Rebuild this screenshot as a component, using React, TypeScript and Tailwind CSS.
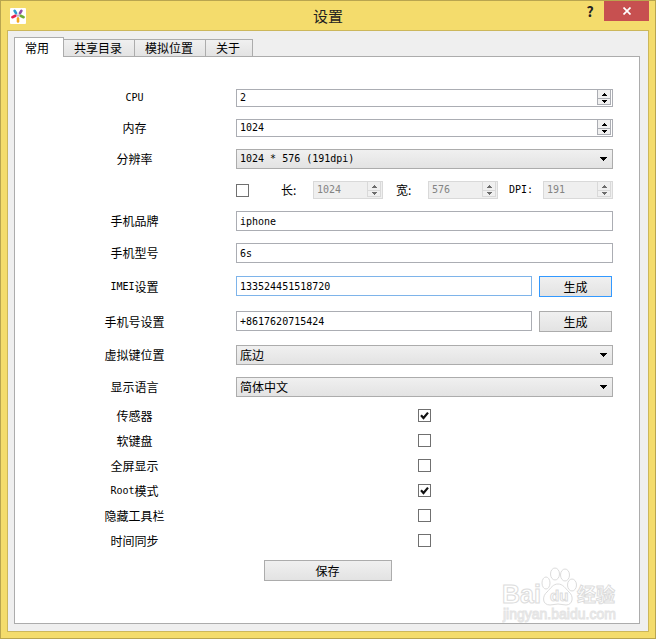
import { useState, type ReactNode } from "react";

const latin = "font-['DejaVu_Sans_Mono','Noto_Sans_CJK_SC',monospace] text-[10px]";
const face = "bg-linear-to-b from-[#f0f0f0] to-[#e3e3e3]";

const tabs = ["常用", "共享目录", "模拟位置", "关于"];

const toggles = [
    { id: "sensor", label: "传感器", on: true },
    { id: "keyboard", label: "软键盘", on: false },
    { id: "fullscreen", label: "全屏显示", on: false },
    { id: "root", prefix: "Root", label: "模式", on: true },
    { id: "toolbar", label: "隐藏工具栏", on: false },
    { id: "time", label: "时间同步", on: false },
];

interface RowProps {
    id: string;
    prefix?: string;
    label?: string;
    className?: string;
    children: ReactNode;
}

function Row({ id, prefix, label, className = "", children }: RowProps) {
    return (
        <div className={`flex items-center gap-[9px] ${className}`}>
            <label htmlFor={id} className="flex w-[185px] shrink-0 items-center justify-center leading-4">
                {prefix && <span className={latin}>{prefix}</span>}
                {label}
            </label>
            <div className="min-w-0 flex-1">{children}</div>
        </div>
    );
}

function Arrow({ up = false }: { up?: boolean }) {
    return (
        <svg width="5" height="3" viewBox="0 0 5 3" fill="currentColor" shapeRendering="crispEdges">
            {up ? <path d="M2 0h1v1h1v1h1v1H0V2h1V1h1z" /> : <path d="M0 0h5v1H4v1H3v1H2V2H1V1H0z" />}
        </svg>
    );
}

function SpinBox({ id, value, disabled = false }: { id: string; value: number; disabled?: boolean }) {
    const [current, setCurrent] = useState(value);
    const line = disabled ? "border-[#d9d9d9]" : "border-[#abadb3]";
    const box = disabled ? "w-[70px] bg-[#efefef] text-[#838383]" : "w-full bg-white";
    const step = `flex w-[14px] items-center justify-center border border-t-0 bg-[#f0f0f0] ${line}`;

    return (
        <div className={`flex h-[18px] border pr-px ${line} ${box}`}>
            <input
                id={id}
                type="number"
                value={current}
                disabled={disabled}
                onChange={(e) => setCurrent(Number(e.target.value))}
                className={`min-w-0 flex-1 bg-transparent pl-[3px] outline-none [appearance:textfield] [&::-webkit-inner-spin-button]:appearance-none ${latin}`}
            />
            <div className={`flex flex-col ${disabled ? "text-[#6d6d6d]" : "text-black"}`}>
                <button type="button" aria-label="增加" disabled={disabled} onClick={() => setCurrent(current + 1)} className={`h-[9px] pt-px ${step}`}>
                    <Arrow up />
                </button>
                <button type="button" aria-label="减少" disabled={disabled} onClick={() => setCurrent(current - 1)} className={`h-[6px] ${step}`}>
                    <Arrow />
                </button>
            </div>
        </div>
    );
}

function TextBox({ id, value, focused = false }: { id: string; value: string; focused?: boolean }) {
    return (
        <input
            id={id}
            type="text"
            defaultValue={value}
            className={`block h-5 w-full min-w-0 border bg-white px-[3px] outline-none ${latin} ${focused ? "border-[#7eb4ea]" : "border-[#abadb3]"}`}
        />
    );
}

function Dropdown({ id, options, mono = false }: { id: string; options: string[]; mono?: boolean }) {
    return (
        <div className="relative">
            <select id={id} className={`block h-5 w-full appearance-none border border-[#acacac] px-[3px] outline-none ${face} ${mono ? latin : "leading-4"}`}>
                {options.map((option) => (
                    <option key={option}>{option}</option>
                ))}
            </select>
            <svg className="pointer-events-none absolute top-2 right-[6px]" width="7" height="4" viewBox="0 0 7 4" shapeRendering="crispEdges">
                <path d="M0 0h7v1H6v1H5v1H4v1H3V3H2V2H1V1H0z" />
            </svg>
        </div>
    );
}

function CheckBox({ id, checked = false, name }: { id: string; checked?: boolean; name?: string }) {
    return (
        <span className="relative block size-[13px]">
            <input id={id} type="checkbox" aria-label={name} defaultChecked={checked} className="peer block size-[13px] appearance-none border border-[#707070] bg-white" />
            <svg className="pointer-events-none absolute inset-0 hidden peer-checked:block" width="13" height="13" viewBox="0 0 13 13">
                <path d="M3 6.3L5.5 9 10 3.6" fill="none" stroke="#111" strokeWidth="2.2" />
            </svg>
        </span>
    );
}

function PushButton({ children, className }: { children: ReactNode; className: string }) {
    return (
        <button type="button" className={`h-[21px] shrink-0 border leading-4 ${face} ${className}`}>
            {children}
        </button>
    );
}

function AppIcon() {
    return (
        <svg width="16" height="16" viewBox="0 0 16 16" strokeWidth="2.6" strokeLinecap="round">
            <rect width="16" height="16" rx="1" fill="#fff" />
            <path d="M7.800 7.800L6 5M8.200 7.800L10 5M8 8v2" stroke="#b9a3cf" strokeWidth="1" />
            <path d="M4.600 2.800l1.500 2.400" stroke="#2e9bd0" />
            <path d="M11.400 2.800L9.900 5.200" stroke="#9150a8" />
            <path d="M2.400 9.200l3-1.400" stroke="#e5214f" />
            <path d="M13.600 9.200l-3-1.400" stroke="#6fae35" />
            <path d="M8 10.500v3" stroke="#f5a51d" />
        </svg>
    );
}

function Watermark() {
    return (
        <svg
            className="pointer-events-none absolute right-[17px] bottom-0"
            width="120"
            height="58"
            viewBox="0 0 120 58"
            fill="#fff"
            stroke="#dcdcdc"
            fontFamily="'Liberation Sans','Noto Sans CJK SC',sans-serif"
            fontWeight="bold"
            aria-hidden="true"
        >
            <text x="0" y="38" fontSize="25">Bai</text>
            <path d="M56 19c5 0 7 4 11 8 5 4 4 13-3 13-3 0-5-1-8-1s-5 1-8 1c-8 0-8-9-3-13 4-4 6-8 11-8z" />
            <ellipse cx="44" cy="18" rx="4" ry="6" />
            <ellipse cx="53" cy="9" rx="4.500" ry="6" />
            <ellipse cx="63" cy="10" rx="4.500" ry="6" />
            <ellipse cx="70" cy="20" rx="4.500" ry="6" />
            <text x="48" y="36" fontSize="15">du</text>
            <text x="75" y="37" fontSize="19" fontFamily="'Noto Sans CJK SC',sans-serif">经验</text>
            <text x="1" y="54" fontSize="14" fontWeight="normal" stroke="#e4e4e4">jingyan.baidu.com</text>
        </svg>
    );
}

export default function App() {
    const [active, setActive] = useState(0);

    return (
        <div className="flex min-h-screen flex-col border border-[#b9a54f] bg-[#f4dc6c] px-[6px] pb-[6px] font-['Noto_Sans_CJK_SC',sans-serif] text-xs text-black">
            <header className="relative flex h-[29px] shrink-0 items-center justify-between pl-[3px]">
                <AppIcon />
                <h1 className="absolute inset-x-0 text-center text-[15px] leading-5 text-[#222]">设置</h1>
                <div className="relative flex self-start">
                    <button type="button" aria-label="帮助" className="h-5 w-7 text-sm font-bold text-[#222]">
                        ?
                    </button>
                    <button type="button" aria-label="关闭" className="flex h-5 w-[45px] items-center justify-center bg-[#c75050]">
                        <svg width="8" height="8" viewBox="0 0 8 8" stroke="#fff" strokeWidth="1.7">
                            <path d="M.5.5l7 7M7.500.5l-7 7" />
                        </svg>
                    </button>
                </div>
            </header>

            <main className="flex flex-1 flex-col border border-[#ccb75b] bg-[#efefef] pt-[6px] pr-2 pb-[7px] pl-[6px]">
                <div role="tablist" className="relative z-10 -mb-px flex items-end">
                    {tabs.map((tab, i) => (
                        <button
                            key={tab}
                            type="button"
                            role="tab"
                            aria-selected={active === i}
                            onClick={() => setActive(i)}
                            className={`-mr-px border border-[#acacac] leading-4 ${active === i ? "h-5 border-b-0 bg-white pr-[14px] pl-[10px]" : `h-[18px] pr-3 pl-[10px] ${face}`}`}
                        >
                            {tab}
                        </button>
                    ))}
                </div>

                <section className="relative flex-1 border border-[#acacac] bg-white pt-8 pr-[26px] pl-[27px]">
                    <form className="flex flex-col">
                        <div className="flex flex-col gap-3">
                            <Row id="cpu" prefix="CPU" className="h-[18px]">
                                <SpinBox id="cpu" value={2} />
                            </Row>
                            <Row id="memory" label="内存" className="h-[18px]">
                                <SpinBox id="memory" value={1024} />
                            </Row>
                            <Row id="resolution" label="分辨率" className="h-5">
                                <Dropdown id="resolution" options={["1024 * 576 (191dpi)"]} mono />
                            </Row>
                            <div className="flex h-[18px] items-center justify-between pl-[194px]">
                                <CheckBox id="custom" name="自定义分辨率" />
                                <div className="flex items-center gap-[11px]">
                                    <div className="flex items-center">
                                        <label htmlFor="length" className="w-[34px] pl-[2px] leading-4">长:</label>
                                        <SpinBox id="length" value={1024} disabled />
                                    </div>
                                    <div className="flex items-center">
                                        <label htmlFor="width" className="w-[34px] pl-[2px] leading-4">宽:</label>
                                        <SpinBox id="width" value={576} disabled />
                                    </div>
                                    <div className="flex items-center">
                                        <label htmlFor="dpi" className={`w-[34px] ${latin}`}>DPI:</label>
                                        <SpinBox id="dpi" value={191} disabled />
                                    </div>
                                </div>
                            </div>
                            <Row id="brand" label="手机品牌" className="h-5">
                                <TextBox id="brand" value="iphone" />
                            </Row>
                            <Row id="model" label="手机型号" className="h-5">
                                <TextBox id="model" value="6s" />
                            </Row>
                            <Row id="imei" prefix="IMEI" label="设置" className="h-[23px]">
                                <div className="flex gap-[7px] pr-px">
                                    <TextBox id="imei" value="133524451518720" focused />
                                    <PushButton className="w-[73px] border-[#3399ff]">生成</PushButton>
                                </div>
                            </Row>
                            <Row id="phone" label="手机号设置" className="h-[23px]">
                                <div className="flex gap-[7px] pr-px">
                                    <TextBox id="phone" value="+8617620715424" />
                                    <PushButton className="w-[73px] border-[#acacac]">生成</PushButton>
                                </div>
                            </Row>
                            <Row id="keys" label="虚拟键位置" className="h-5">
                                <Dropdown id="keys" options={["底边"]} />
                            </Row>
                            <Row id="language" label="显示语言" className="h-5">
                                <Dropdown id="language" options={["简体中文"]} />
                            </Row>
                        </div>

                        <div className="pt-[6px] pb-[7px]">
                            {toggles.map((toggle) => (
                                <Row key={toggle.id} id={toggle.id} prefix={toggle.prefix} label={toggle.label} className="h-[25px]">
                                    <div className="flex justify-center">
                                        <CheckBox id={toggle.id} checked={toggle.on} />
                                    </div>
                                </Row>
                            ))}
                        </div>

                        <PushButton className="w-32 self-center border-[#acacac]">保存</PushButton>
                    </form>
                    <Watermark />
                </section>
            </main>
        </div>
    );
}
